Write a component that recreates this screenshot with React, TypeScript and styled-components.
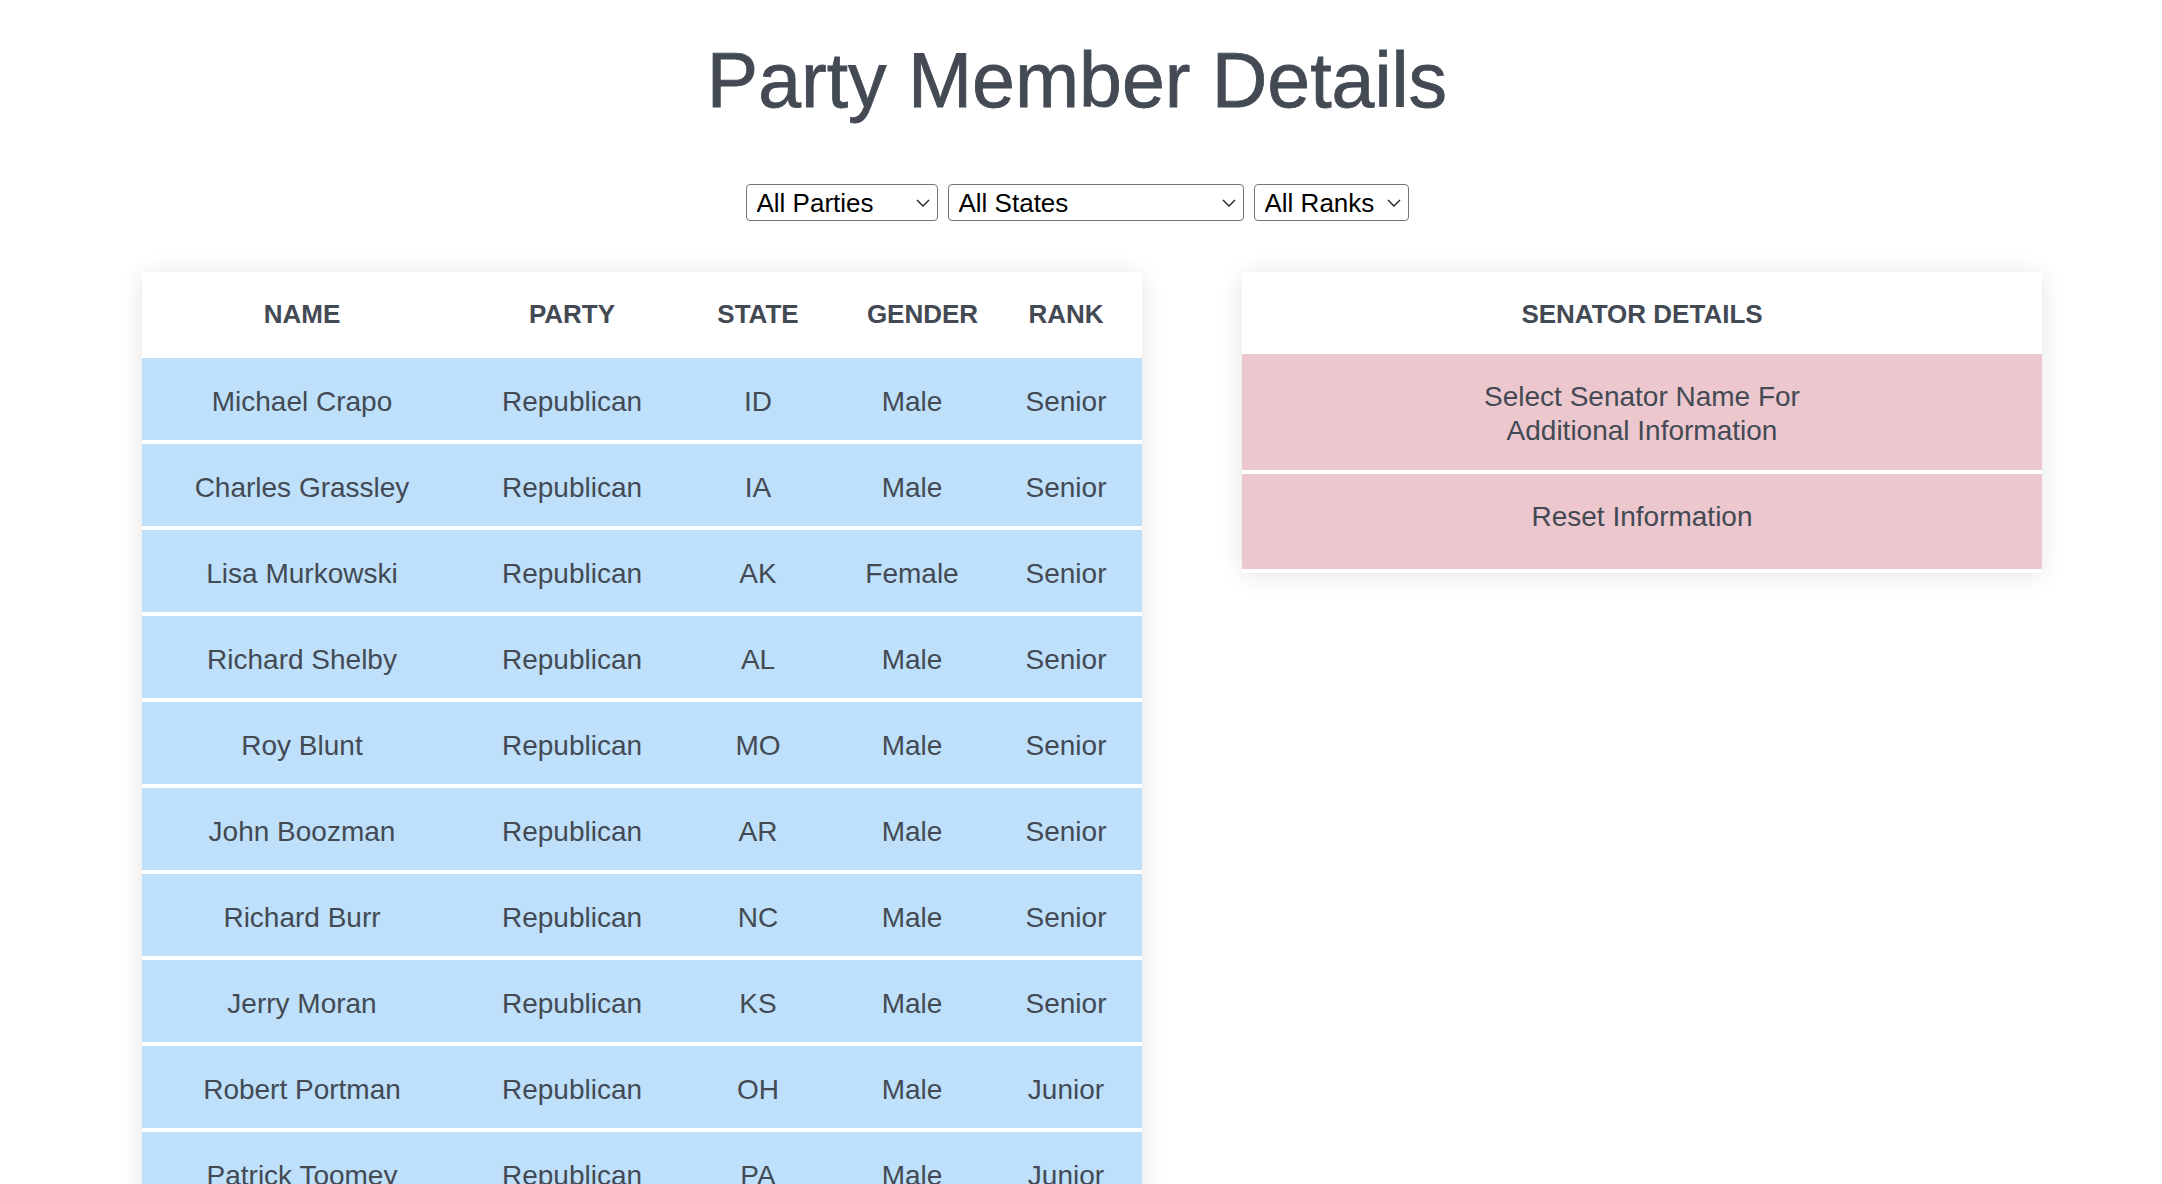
import React from 'react';
import styled, { createGlobalStyle } from 'styled-components';

const GlobalStyle = createGlobalStyle`
    html,
    body {
        margin: 0;
        padding: 0;
        overflow: hidden;
        background: #ffffff;
        font-family: 'Liberation Sans', Arial, sans-serif;
        color: #434a54;
    }
`;

const StyledPage = styled.div`
    display: flex;
    flex-direction: column;
    padding-top: 37px;
`;

const StyledTop = styled.header`
    display: flex;
    flex-direction: column;
    align-items: center;
    padding-right: 8px;
`;

const StyledTitle = styled.h1`
    margin: 0;
    font-size: 77px;
    line-height: 87px;
    font-weight: 400;
    color: #434a54;
    -webkit-text-stroke: 0.8px #434a54;
`;

const StyledFilterRow = styled.div`
    display: flex;
    gap: 10px;
    margin-top: 60px;
`;

const StyledSelectWrap = styled.div<{ $width: number }>`
    position: relative;
    width: ${(props) => props.$width}px;
    height: 37px;
`;

const StyledSelect = styled.select`
    appearance: none;
    width: 100%;
    height: 100%;
    box-sizing: border-box;
    padding: 0 0 0 10px;
    border: 1.5px solid #767676;
    border-radius: 4px;
    background: #ffffff;
    color: #000000;
    font-family: 'Liberation Sans', Arial, sans-serif;
    font-size: 26px;
    outline: none;
`;

const StyledChevron = styled.svg`
    position: absolute;
    right: 8px;
    top: 15px;
    width: 14px;
    height: 8px;
    pointer-events: none;
`;

const StyledMain = styled.main`
    display: flex;
    align-items: flex-start;
    gap: 100px;
    padding: 0 120px 0 142px;
    margin-top: 51px;
`;

const StyledCard = styled.section<{ $width: number }>`
    width: ${(props) => props.$width}px;
    background: #ffffff;
    box-shadow: 0 2px 22px rgba(0, 0, 0, 0.11);
`;

const StyledRow = styled.div<{ $head?: boolean }>`
    display: grid;
    grid-template-columns: 320px 220px 152px 156px 152px;
    height: 82px;
    border-bottom: 4px solid #ffffff;
    background: ${(props) => (props.$head ? '#ffffff' : '#bee0fa')};
`;

const StyledCell = styled.div<{ $head?: boolean; $shift?: number }>`
    display: flex;
    align-items: center;
    justify-content: center;
    padding-left: ${(props) => props.$shift || 0}px;
    padding-top: ${(props) => (props.$head ? 2 : 5)}px;
    font-size: ${(props) => (props.$head ? '26px' : '28px')};
    font-weight: ${(props) => (props.$head ? 700 : 400)};
    color: #434a54;
    white-space: nowrap;
`;

const StyledPanelHead = styled.div`
    display: flex;
    align-items: center;
    justify-content: center;
    height: 82px;
    padding-top: 2px;
    box-sizing: border-box;
    font-size: 26px;
    font-weight: 700;
    color: #434a54;
`;

const StyledPanelItem = styled.div<{ $bottom: number }>`
    padding: 26px 20px ${(props) => props.$bottom}px;
    background: #ecc7cd;
    border-bottom: 4px solid #ffffff;
    text-align: center;
    font-size: 28px;
    line-height: 34px;
    color: #434a54;
    cursor: pointer;
`;

type Senator = {
    name: string;
    party: string;
    state: string;
    gender: string;
    rank: string;
};

const senators: Senator[] = [
    { name: 'Michael Crapo', party: 'Republican', state: 'ID', gender: 'Male', rank: 'Senior' },
    { name: 'Charles Grassley', party: 'Republican', state: 'IA', gender: 'Male', rank: 'Senior' },
    { name: 'Lisa Murkowski', party: 'Republican', state: 'AK', gender: 'Female', rank: 'Senior' },
    { name: 'Richard Shelby', party: 'Republican', state: 'AL', gender: 'Male', rank: 'Senior' },
    { name: 'Roy Blunt', party: 'Republican', state: 'MO', gender: 'Male', rank: 'Senior' },
    { name: 'John Boozman', party: 'Republican', state: 'AR', gender: 'Male', rank: 'Senior' },
    { name: 'Richard Burr', party: 'Republican', state: 'NC', gender: 'Male', rank: 'Senior' },
    { name: 'Jerry Moran', party: 'Republican', state: 'KS', gender: 'Male', rank: 'Senior' },
    { name: 'Robert Portman', party: 'Republican', state: 'OH', gender: 'Male', rank: 'Junior' },
    { name: 'Patrick Toomey', party: 'Republican', state: 'PA', gender: 'Male', rank: 'Junior' },
];

function Filter({ width, label }: { width: number; label: string }): JSX.Element {
    return (
        <StyledSelectWrap $width={width}>
            <StyledSelect defaultValue={label}>
                <option>{label}</option>
            </StyledSelect>
            <StyledChevron viewBox="0 0 14 8">
                <path d="M1 1 L7 7 L13 1" fill="none" stroke="#222" strokeWidth="1.4" />
            </StyledChevron>
        </StyledSelectWrap>
    );
}

export default function App(): JSX.Element {
    return (
        <StyledPage>
            <GlobalStyle />
            <StyledTop>
                <StyledTitle>Party Member Details</StyledTitle>
                <StyledFilterRow>
                    <Filter width={192} label="All Parties" />
                    <Filter width={296} label="All States" />
                    <Filter width={155} label="All Ranks" />
                </StyledFilterRow>
            </StyledTop>
            <StyledMain>
                <StyledCard $width={1000}>
                    <StyledRow $head>
                        <StyledCell $head>NAME</StyledCell>
                        <StyledCell $head>PARTY</StyledCell>
                        <StyledCell $head>STATE</StyledCell>
                        <StyledCell $head $shift={21}>
                            GENDER
                        </StyledCell>
                        <StyledCell $head>RANK</StyledCell>
                    </StyledRow>
                    {senators.map((s) => (
                        <StyledRow key={s.name}>
                            <StyledCell>{s.name}</StyledCell>
                            <StyledCell>{s.party}</StyledCell>
                            <StyledCell>{s.state}</StyledCell>
                            <StyledCell>{s.gender}</StyledCell>
                            <StyledCell>{s.rank}</StyledCell>
                        </StyledRow>
                    ))}
                </StyledCard>
                <StyledCard $width={800}>
                    <StyledPanelHead>SENATOR DETAILS</StyledPanelHead>
                    <StyledPanelItem $bottom={22}>
                        Select Senator Name For
                        <br />
                        Additional Information
                    </StyledPanelItem>
                    <StyledPanelItem $bottom={35}>Reset Information</StyledPanelItem>
                </StyledCard>
            </StyledMain>
        </StyledPage>
    );
}
